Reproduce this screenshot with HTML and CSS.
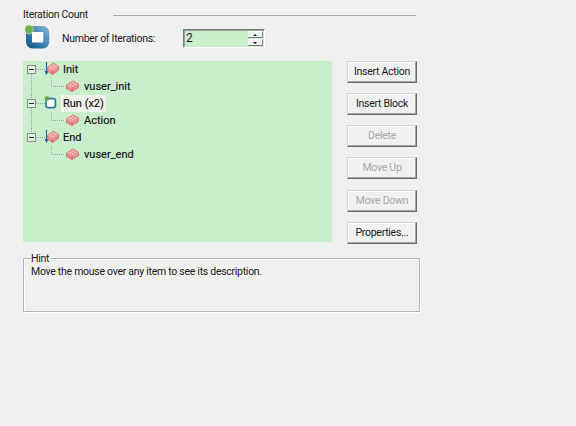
FILE: index.html
```html
<!DOCTYPE html>
<html lang="en">
<head>
<meta charset="utf-8">
<title>Iteration Count</title>
<link rel="stylesheet" href="styles.css">
</head>
<body>
<svg class="defs" width="0" height="0" aria-hidden="true">
  <defs>
    <linearGradient id="ringFill" x1="1" y1="0" x2="0" y2="1">
      <stop offset="0" stop-color="#74abcd"/>
      <stop offset=".45" stop-color="#4388b6"/>
      <stop offset="1" stop-color="#175f93"/>
    </linearGradient>
    <symbol id="brick" viewBox="0 0 13 12" preserveAspectRatio="none">
      <path d="M.5 5 7 1 12.5 4V7.5L6 11.5 .5 8.5Z" fill="#ea8f96" stroke="#d9666f" stroke-width=".9"/>
      <path d="M.8 5 7 1.2 12.2 4 6 7.8Z" fill="#f5b1b3"/>
      <path d="M6 7.8V11.5" stroke="#cf5f69" stroke-width=".9"/>
      <ellipse cx="4.4" cy="4.4" rx="1.6" ry="1.1" fill="#fbd3d1" stroke="#dc7a83" stroke-width=".6"/>
      <ellipse cx="7" cy="2.8" rx="1.6" ry="1.1" fill="#fbd3d1" stroke="#dc7a83" stroke-width=".6"/>
      <ellipse cx="6.6" cy="5.8" rx="1.6" ry="1.1" fill="#fbd3d1" stroke="#dc7a83" stroke-width=".6"/>
      <ellipse cx="9.4" cy="4.2" rx="1.6" ry="1.1" fill="#fbd3d1" stroke="#dc7a83" stroke-width=".6"/>
    </symbol>
    <symbol id="toggle" viewBox="0 0 9 9">
      <rect x=".5" y=".5" width="8" height="8" fill="#e6efe2" stroke="#85908a"/>
      <path d="M2 4.5H7" stroke="#222"/>
    </symbol>
    <symbol id="arrow" viewBox="0 0 5 14">
      <path d="M2.5 0V10" stroke="#2f6fb0" stroke-width="1.2"/>
      <path d="M.5 9H4.5L2.5 13Z" fill="#1d5ea6"/>
    </symbol>
    <symbol id="loop" viewBox="0 0 25 25">
      <rect x="4" y="5" width="17.3" height="16.4" rx="3.5" fill="#fff" stroke="url(#ringFill)" stroke-width="6"/>
      <circle cx="4" cy="5.5" r="4.4" fill="#6fae4c" stroke="#cfe4bd" stroke-width=".8"/>
    </symbol>
    <symbol id="loopSmall" viewBox="0 0 13 13">
      <rect x="2" y="2.6" width="9.4" height="9" rx="2.2" fill="#fff" stroke="#2a78ab" stroke-width="1.7"/>
      <circle cx="3" cy="2.6" r="2.4" fill="#5fa842"/>
    </symbol>
  </defs>
</svg>

<main class="page">
  <header class="section-head">
    <span class="section-title">Iteration Count</span>
    <span class="section-rule"></span>
  </header>

  <div class="iter-row">
    <svg class="iter-icon" width="25" height="25"><use href="#loop"/></svg>
    <label class="iter-label">Number of Iterations:</label>
    <div class="spinner">
      <span class="spinner-value">2</span>
      <span class="spin-buttons">
        <span class="spin-btn"><i class="tri-up"></i></span>
        <span class="spin-btn"><i class="tri-down"></i></span>
      </span>
    </div>
  </div>

  <div class="work-row">
    <div class="tree">
      <div class="tree-row">
        <svg class="gutter-parent" width="38" height="17">
          <path class="dots" d="M8.5 13V17M13 8.5H22"/>
          <use href="#toggle" x="4" y="4" width="9" height="9"/>
          <use href="#arrow" x="21" y="1" width="5" height="14"/>
          <use href="#brick" x="24" y="1" width="12" height="13"/>
        </svg>
        <span class="node">Init</span>
      </div>
      <div class="tree-row">
        <svg class="gutter-child" width="61" height="17">
          <path class="dots" d="M8.5 0V17M28.5 0V8.5H42"/>
          <use href="#brick" x="43" y="2" width="13" height="12"/>
        </svg>
        <span class="leaf">vuser_init</span>
      </div>
      <div class="tree-row">
        <svg class="gutter-parent" width="38" height="17">
          <path class="dots" d="M8.5 0V4M8.5 13V17M13 8.5H22"/>
          <use href="#toggle" x="4" y="4" width="9" height="9"/>
          <use href="#loopSmall" x="21" y="1" width="13" height="13"/>
        </svg>
        <span class="node node-current">Run (x2)</span>
      </div>
      <div class="tree-row">
        <svg class="gutter-child" width="61" height="17">
          <path class="dots" d="M8.5 0V17M28.5 0V8.5H42"/>
          <use href="#brick" x="43" y="2" width="13" height="12"/>
        </svg>
        <span class="leaf">Action</span>
      </div>
      <div class="tree-row">
        <svg class="gutter-parent" width="38" height="17">
          <path class="dots" d="M8.5 0V4M13 8.5H22"/>
          <use href="#toggle" x="4" y="4" width="9" height="9"/>
          <use href="#arrow" x="21" y="1" width="5" height="14"/>
          <use href="#brick" x="24" y="1" width="12" height="13"/>
        </svg>
        <span class="node">End</span>
      </div>
      <div class="tree-row">
        <svg class="gutter-child" width="61" height="17">
          <path class="dots" d="M28.5 0V8.5H42"/>
          <use href="#brick" x="43" y="2" width="13" height="12"/>
        </svg>
        <span class="leaf">vuser_end</span>
      </div>
    </div>

    <div class="actions">
      <button class="btn" type="button">Insert Action</button>
      <button class="btn" type="button">Insert Block</button>
      <button class="btn" type="button" disabled>Delete</button>
      <button class="btn" type="button" disabled>Move Up</button>
      <button class="btn btn-spaced" type="button" disabled>Move Down</button>
      <button class="btn" type="button">Properties...</button>
    </div>
  </div>

  <fieldset class="hint">
    <legend class="hint-legend">Hint</legend>
    <p class="hint-text">Move the mouse over any item to see its description.</p>
  </fieldset>
</main>
</body>
</html>
```
FILE: styles.css
```css
* {
  box-sizing: border-box;
}

html,
body {
  margin: 0;
  height: 100%;
}

body {
  background: #f0f0f0;
  color: #1a1a1a;
  font-family: Roboto, "Liberation Sans", sans-serif;
  font-size: 10.5px;
  letter-spacing: -0.28px;
  overflow: hidden;
}

.defs {
  position: absolute;
}

.page {
  display: flex;
  flex-direction: column;
  padding: 8px 0 0 23px;
}

.section-head {
  display: flex;
  align-items: center;
  width: 393px;
  height: 14px;
}

.section-title {
  width: 90px;
  flex: none;
  line-height: 12px;
  margin-bottom: 1px;
}

.section-rule {
  flex: 1;
  height: 1px;
  margin-top: 1px;
  background: #a8a8a8;
}

.iter-row {
  display: flex;
  align-items: flex-start;
  height: 39px;
  padding: 2px 0 0 2px;
}

.iter-icon {
  flex: none;
}

.iter-label {
  width: 121px;
  margin: 8px 0 0 12px;
  flex: none;
}

.spinner {
  display: flex;
  justify-content: space-between;
  width: 82px;
  height: 19px;
  margin-top: 5px;
  padding: 1px 1px 1px 2px;
  background: #c8eecb;
  border: 1px solid;
  border-color: #7a7a7a #fff #fff #7a7a7a;
  box-shadow: inset 1px 1px 0 #a0a0a0;
}

.spinner-value {
  font-size: 12px;
  line-height: 15px;
}

.spin-buttons {
  display: flex;
  flex-direction: column;
  gap: 1px;
  width: 15px;
}

.spin-btn {
  display: flex;
  flex: 1;
  align-items: center;
  justify-content: center;
  background: #f0f0f0;
  border-top: 1px solid #fff;
  border-bottom: 1px solid #777;
  border-right: 1px solid #888;
}

.tri-up,
.tri-down {
  width: 0;
  height: 0;
  border-left: 2px solid transparent;
  border-right: 2px solid transparent;
}

.tri-up {
  border-bottom: 2px solid #111;
}

.tri-down {
  border-top: 2px solid #111;
}

.work-row {
  display: flex;
  gap: 15px;
}

.tree {
  width: 309px;
  height: 181px;
  background: #c8eecb;
}

.tree-row {
  display: flex;
  align-items: center;
  height: 17px;
}

.gutter-parent,
.gutter-child {
  flex: none;
}

.dots {
  fill: none;
  stroke: #9aa89c;
  stroke-width: 1;
  stroke-dasharray: 1 1;
}

.node {
  height: 17px;
  padding: 1px 2px 0;
  line-height: 16px;
  color: #111;
  font-size: 11px;
  letter-spacing: 0;
  -webkit-text-stroke: 0.15px #111;
}

.node-current {
  background: #f1f3ee;
}

.leaf {
  height: 17px;
  padding-top: 1px;
  line-height: 16px;
  color: #111;
  font-size: 11px;
  letter-spacing: 0;
  -webkit-text-stroke: 0.15px #111;
}

.actions {
  display: flex;
  flex-direction: column;
  gap: 10px;
  width: 70px;
}

.btn {
  flex: none;
  width: 70px;
  height: 22px;
  padding: 0 0 2px;
  background: #f0f0f0;
  color: #1a1a1a;
  font: inherit;
  letter-spacing: inherit;
  border: 1px solid;
  border-color: #d4d4d4 #6b6b6b #6b6b6b #d4d4d4;
  box-shadow: inset -1px -1px 0 #a8a8a8, inset 1px 1px 0 #fff;
}

.btn:disabled {
  color: #a6a6a6;
}

.btn-spaced {
  margin-top: 1px;
}

.hint {
  width: 397px;
  height: 59px;
  margin: 9px 0 0;
  padding: 0 7px;
  border: 1px solid #b4b4b4;
  box-shadow: inset 1px 1px 0 #fff, 1px 1px 0 #fff;
}

.hint-legend {
  padding: 0 1px 0 0;
  line-height: 11px;
}

.hint-text {
  margin: 1px 0 0;
  line-height: 14px;
}
```
